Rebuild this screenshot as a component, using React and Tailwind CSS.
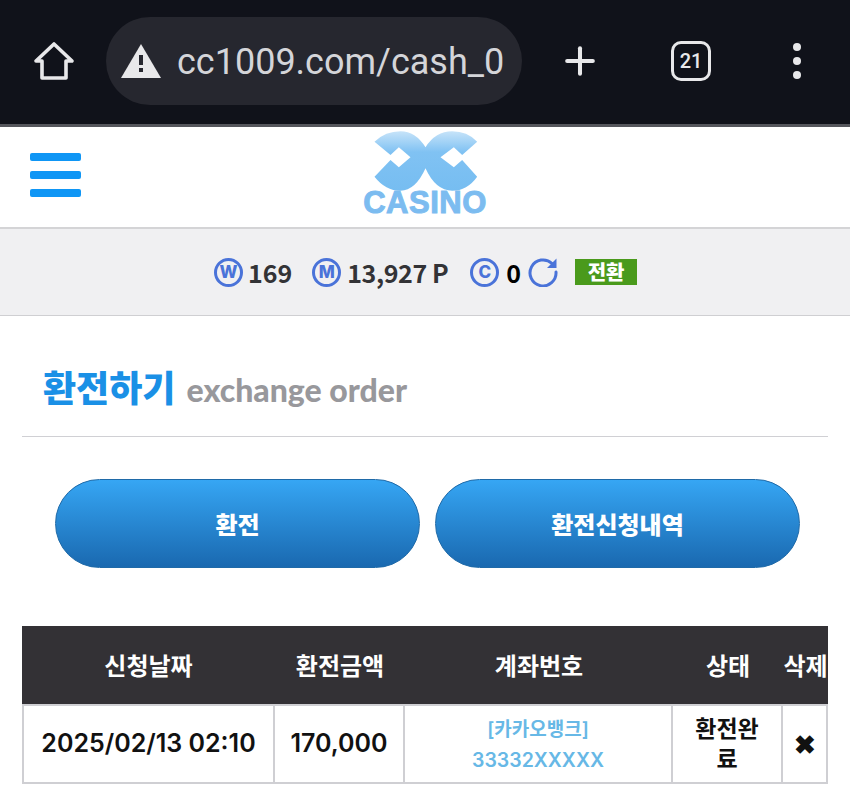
import React from "react";
import { Plus } from "lucide-react";

const kr = "font-['Noto_Sans_CJK_KR','Noto_Sans',sans-serif]";
const num = "font-['Inter','Noto_Sans_CJK_KR',sans-serif]";

const HomeIcon = () => (
  <svg width="42" height="42" viewBox="0 0 42 42" fill="none" stroke="#e8e8ea" strokeWidth="3.6" strokeLinejoin="round" strokeLinecap="round">
    <path d="M3 21 21 4l18 17h-6v17H9V21z" />
  </svg>
);

const WarnIcon = () => (
  <svg width="40" height="36" viewBox="0 0 40 36">
    <path d="M20 1 40 35H0z" fill="#e8e8ea" />
    <rect x="18" y="12" width="4" height="10" fill="#26272f" />
    <rect x="18" y="25" width="4" height="4" fill="#26272f" />
  </svg>
);

const Coin = ({ letter }) => (
  <span className="flex h-[29px] w-[29px] items-center justify-center rounded-full border-[3px] border-[#4a73d9] font-['Inter',sans-serif] text-[17px] leading-none font-extrabold text-[#4a73d9]">
    {letter}
  </span>
);

const RefreshIcon = () => (
  <svg width="30" height="30" viewBox="0 0 30 30" fill="none">
    <path d="M24 6.5A13 13 0 1 0 28 15" stroke="#4a73d9" strokeWidth="3" strokeLinecap="round" />
    <path d="M28.5 1.5V11H19z" fill="#4a73d9" />
  </svg>
);

const Logo = () => (
  <svg width="107" height="62" viewBox="50 10 320 186" className="block">
    <defs>
      <linearGradient id="logoFill" x1="0" y1="0" x2="0" y2="1">
        <stop offset="0" stopColor="#c6e3f9" />
        <stop offset="0.35" stopColor="#80c2f3" />
        <stop offset="1" stopColor="#76bdf1" />
      </linearGradient>
    </defs>
    <path
      fill="url(#logoFill)"
      d="M57 45Q90 14 135 14 180 14 210 62 240 14 290 14 335 14 365 45L320 85 295 62 255 92 295 122 320 100 365 150Q335 192 290 192 240 192 210 125 180 192 135 192 90 192 57 150L105 100 130 122 165 92 130 62 105 85Z"
    />
  </svg>
);

const cell = "border-t-2 border-r-2 border-b-2 border-[#cfcfd3]";

export default function App() {
  return (
    <div className={`h-[785px] w-[850px] overflow-hidden bg-white ${kr}`}>
      <div className="flex h-[127px] items-center border-b-[3px] border-[#55565c] bg-[#10121a] pb-[2px]">
        <div className="ml-[33px] flex w-[42px] shrink-0">
          <HomeIcon />
        </div>
        <div className="ml-[31px] flex h-[88px] w-[416px] shrink-0 items-center overflow-hidden rounded-[44px] bg-[#26272f] pl-[15px]">
          <WarnIcon />
          <span className="ml-[16px] w-[328px] overflow-hidden pt-[2px] font-['Roboto',sans-serif] text-[36px] leading-none whitespace-nowrap text-[#d4d5d9]">
            cc1009.com/cash_02
          </span>
        </div>
        <Plus className="ml-[36px] h-[44px] w-[44px] shrink-0 text-[#e8e8ea]" strokeWidth={2.2} />
        <span className="ml-[69px] flex h-[40px] w-[40px] shrink-0 items-center justify-center rounded-[10px] border-[3.5px] border-[#e8e8ea] font-['Roboto',sans-serif] text-[20px] font-medium text-[#e8e8ea]">
          21
        </span>
        <span className="ml-[82px] flex shrink-0 flex-col gap-[6px]">
          <span className="h-[8px] w-[8px] rounded-full bg-[#e8e8ea]" />
          <span className="h-[8px] w-[8px] rounded-full bg-[#e8e8ea]" />
          <span className="h-[8px] w-[8px] rounded-full bg-[#e8e8ea]" />
        </span>
      </div>

      <div className="flex h-[102px] items-start border-b-2 border-[#d4d4d6] pl-[30px]">
        <div className="mt-[26px] flex w-[51px] shrink-0 flex-col gap-[10px]">
          <span className="h-[8px] rounded-[2px] bg-[#0f96f5]" />
          <span className="h-[8px] rounded-[2px] bg-[#0f96f5]" />
          <span className="h-[8px] rounded-[2px] bg-[#0f96f5]" />
        </div>
        <div className="ml-[283px] flex w-[122px] shrink-0 flex-col items-center pt-[3px]">
          <Logo />
          <span className="mt-[-4px] font-['Liberation_Sans',sans-serif] text-[31px] leading-[30px] font-bold tracking-[0.5px] text-[#7cbcf0] [-webkit-text-stroke:1px_#7cbcf0]">
            CASINO
          </span>
        </div>
      </div>

      <div className="flex h-[87px] items-center border-b border-[#cfcfd2] bg-[#f0f0f2] pl-[214px]">
        <Coin letter="W" />
        <span className="ml-[5px] text-[25px] leading-none font-bold text-[#333336]">169</span>
        <span className="ml-[20px]">
          <Coin letter="M" />
        </span>
        <span className="ml-[6px] text-[25px] leading-none font-bold tracking-[-0.4px] text-[#333336]">13,927 P</span>
        <span className="ml-[22px]">
          <Coin letter="C" />
        </span>
        <span className="ml-[7px] text-[25px] leading-none font-bold text-black">0</span>
        <span className="ml-[7px]">
          <RefreshIcon />
        </span>
        <span className="ml-[17px] flex h-[26px] w-[62px] items-center justify-center bg-[#4a9a1c] text-[20px] leading-none font-black text-white">
          전환
        </span>
      </div>

      <div className="mx-[22px]">
        <div className="flex h-[121px] items-end border-b border-[#d0d0d4] pb-[26px] pl-[21px]">
          <span className="text-[36px] leading-[48px] font-black text-[#1a90e6]">환전하기</span>
          <span className="ml-[11px] font-['Lato',sans-serif] text-[32px] leading-[40px] font-black text-[#98989c]">
            exchange order
          </span>
        </div>

        <div className="mt-[42px] flex gap-[15px] pl-[33px] pr-[28px]">
          <button className="h-[89px] flex-1 rounded-[45px] border border-[#1f6aa8] bg-gradient-to-b from-[#36a6f4] to-[#1a69b0] text-[24px] font-black text-white">
            환전
          </button>
          <button className="h-[89px] flex-1 rounded-[45px] border border-[#1f6aa8] bg-gradient-to-b from-[#36a6f4] to-[#1a69b0] text-[24px] font-black text-white">
            환전신청내역
          </button>
        </div>

        <table className="mt-[58px] w-[806px] table-fixed border-separate border-spacing-0">
          <colgroup>
            <col className="w-[253px]" />
            <col className="w-[130px]" />
            <col className="w-[268px]" />
            <col className="w-[110px]" />
            <col className="w-[45px]" />
          </colgroup>
          <thead>
            <tr className="h-[78px] bg-[#333135] text-[24px] font-black text-white">
              <th>신청날짜</th>
              <th>환전금액</th>
              <th>계좌번호</th>
              <th>상태</th>
              <th className="whitespace-nowrap">삭제</th>
            </tr>
          </thead>
          <tbody>
            <tr className={`h-[80px] text-center ${num} text-[25px] font-semibold text-[#111]`}>
              <td className={`${cell} border-l-2`}>2025/02/13 02:10</td>
              <td className={cell}>170,000</td>
              <td className={`${cell} text-[19.5px] leading-[30px] text-[#67b8e6]`}>
                <span className="text-[19px]">[카카오뱅크]</span>
                <br />
                33332XXXXX
              </td>
              <td className={`${cell} px-[16px] text-[23px] leading-[30px] font-bold`}>환전완료</td>
              <td className={`${cell} text-[26px] font-bold`}>✖</td>
            </tr>
          </tbody>
        </table>
      </div>
    </div>
  );
}
